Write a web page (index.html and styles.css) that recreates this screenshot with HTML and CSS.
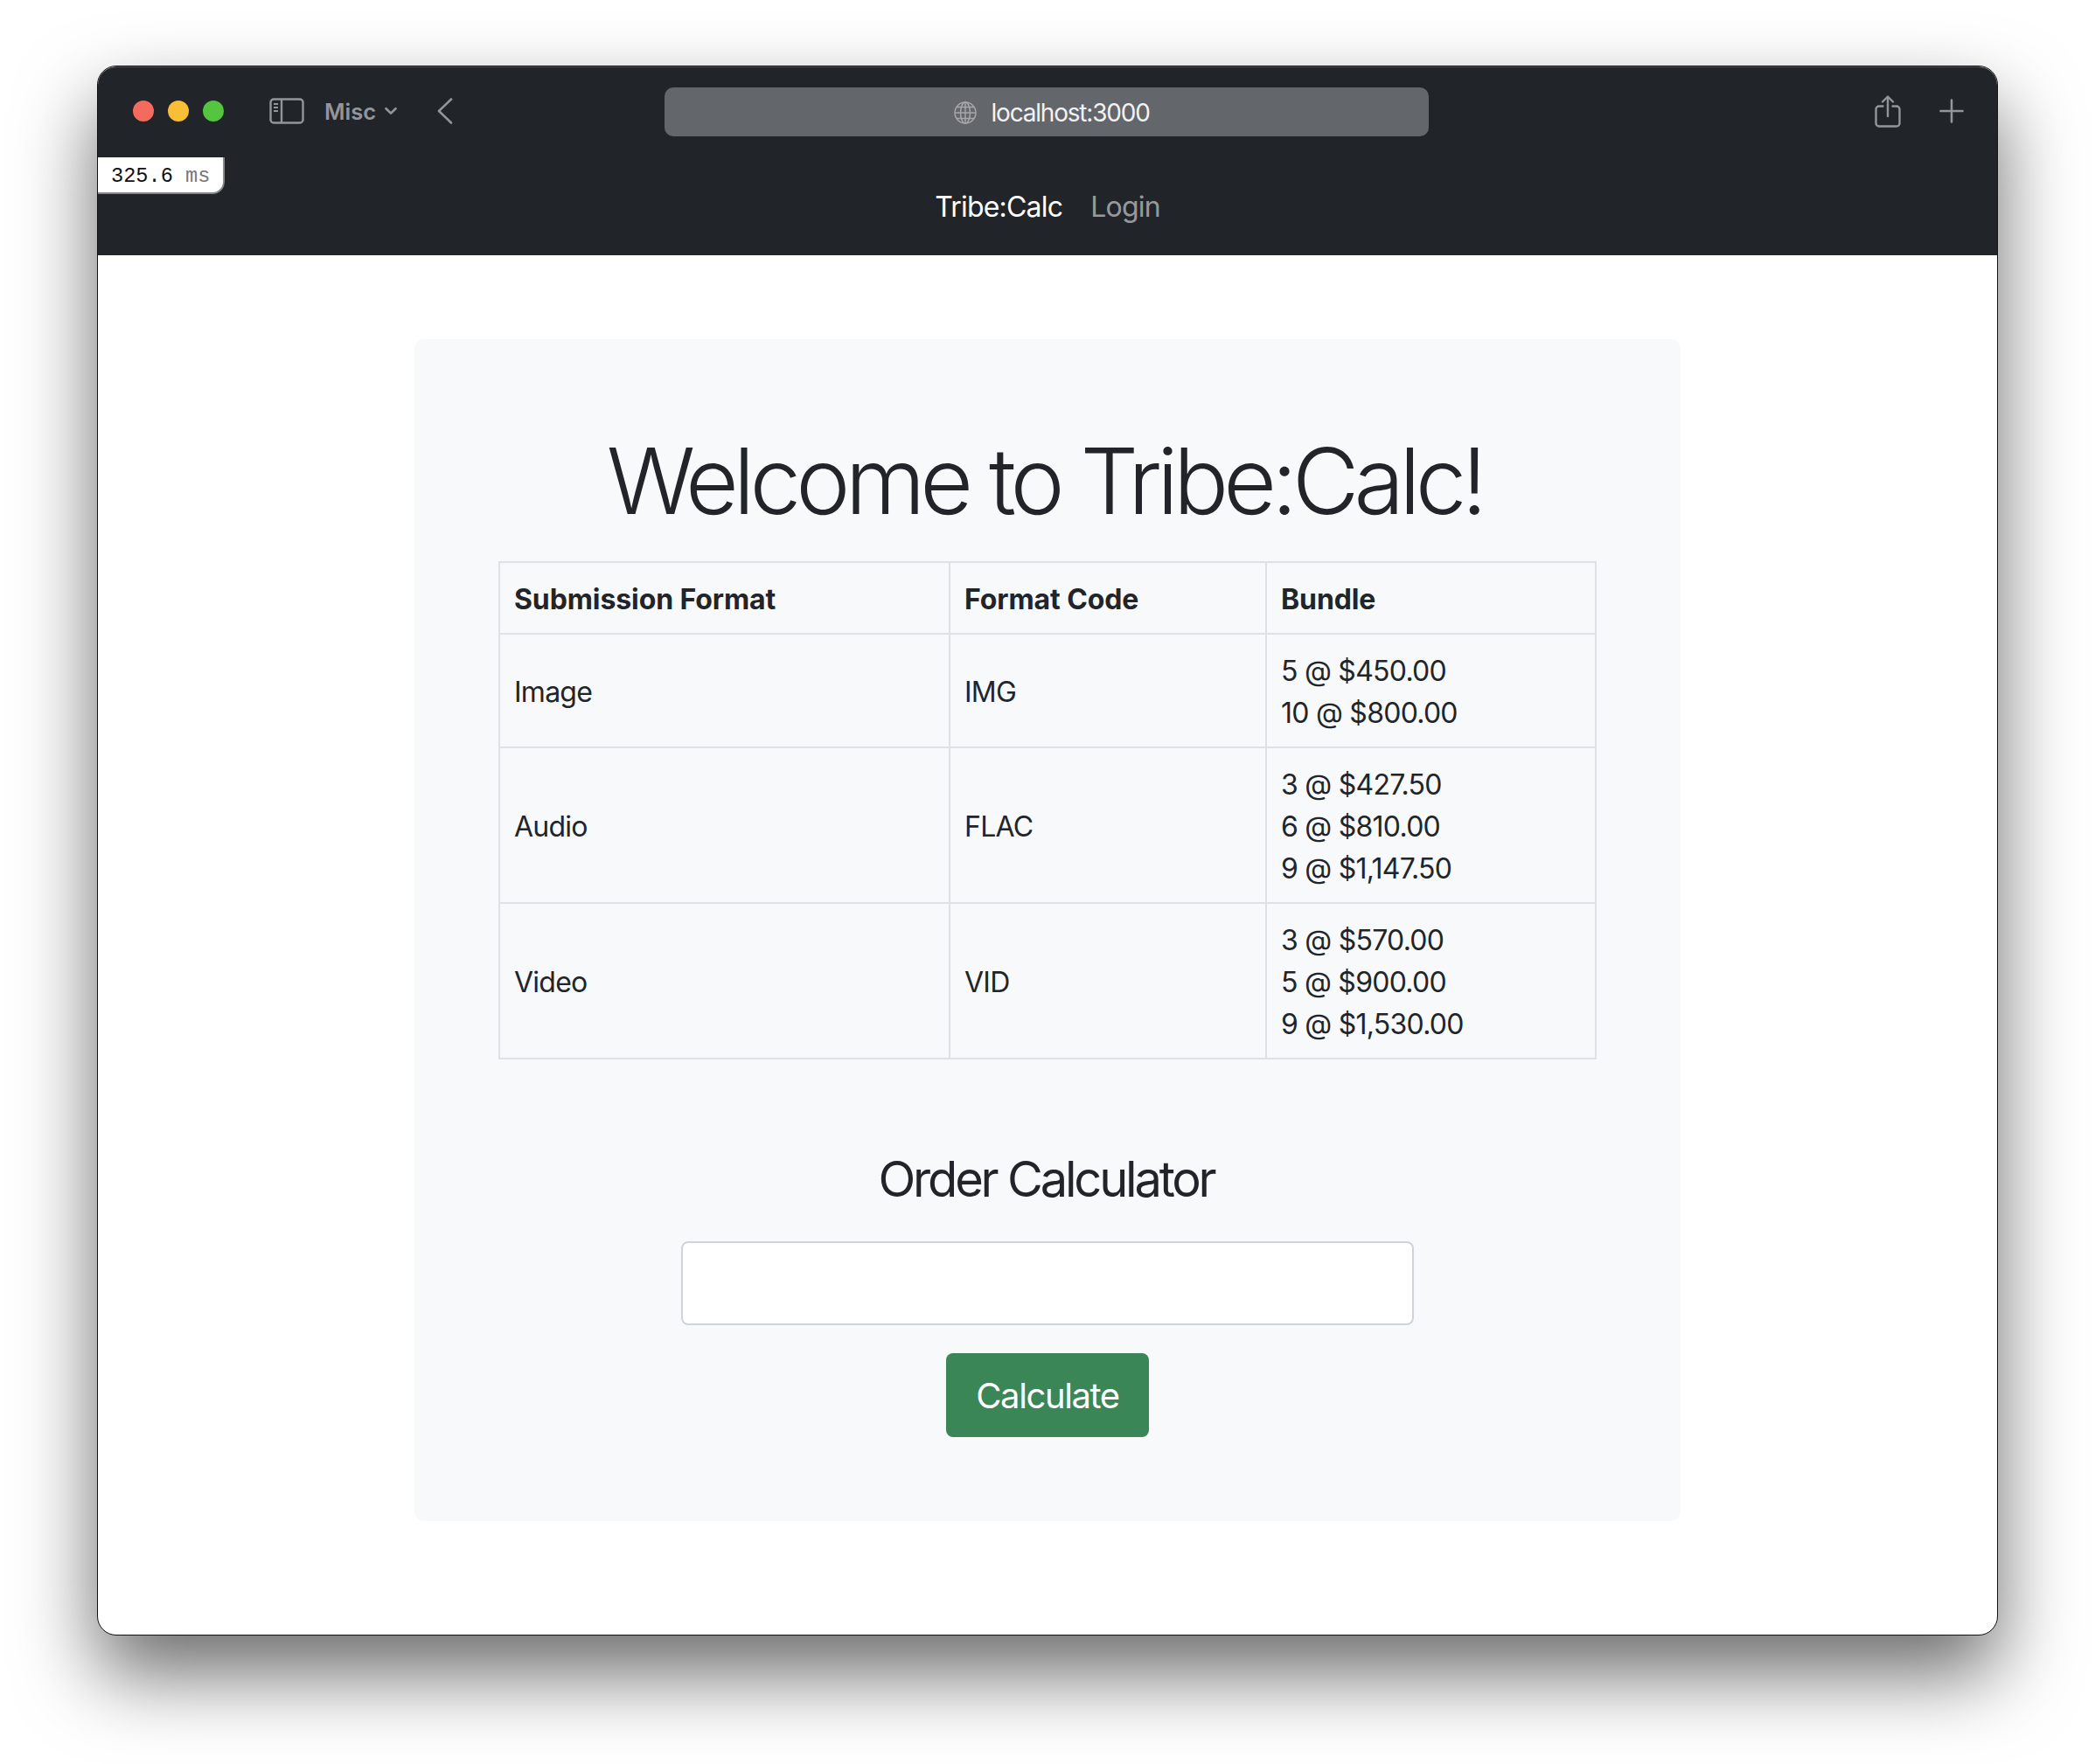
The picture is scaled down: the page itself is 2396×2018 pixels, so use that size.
FILE: index.html
```html
<!DOCTYPE html>
<html lang="en">
<head>
<meta charset="utf-8" />
<title>Tribe:Calc</title>
<link rel="stylesheet" href="styles.css">
</head>
<body>
	<div class="browser">
		<div class="toolbar">
			<div class="dots">
				<span class="dot red"></span>
				<span class="dot yellow"></span>
				<span class="dot green"></span>
			</div>
			<svg class="sideIcon" width="40" height="30" viewBox="0 0 40 30" fill="none" stroke="#92969b" stroke-width="2.4">
				<rect x="1.5" y="1.5" width="37" height="27" rx="3.5"/>
				<path d="M14 1.5v27"/>
				<path d="M5 7h5M5 11h5M5 15h5" stroke-width="2"/>
			</svg>
			<span class="misc">Misc</span>
			<svg class="miscArrow" width="14" height="10" viewBox="0 0 14 10" fill="none" stroke="#92969b" stroke-width="2.6" stroke-linecap="round" stroke-linejoin="round">
				<path d="M1.5 2.2L7 7.6l5.5-5.4"/>
			</svg>
			<svg class="backIcon" width="18" height="30" viewBox="0 0 18 30" fill="none" stroke="#92969b" stroke-width="2.6" stroke-linecap="round" stroke-linejoin="round">
				<path d="M16 1.5L2 15l14 13.5"/>
			</svg>
			<div class="urlBar">
				<svg class="globe" width="26" height="26" viewBox="0 0 26 26" fill="none" stroke="#a5a7aa" stroke-width="1.5">
					<circle cx="13" cy="13" r="12"/>
					<ellipse cx="13" cy="13" rx="5.5" ry="12"/>
					<path d="M13 1v24M1 13h24M3 6.5h20M3 19.5h20"/>
				</svg>
				<span>localhost:3000</span>
			</div>
			<svg class="shareIcon" width="30" height="37" viewBox="0 0 30 37" fill="none" stroke="#92969b" stroke-width="2.4" stroke-linecap="round" stroke-linejoin="round">
				<path d="M9.5 12.5H5a3.500 3.500 0 0 0-3.500 3.500v16A3.500 3.500 0 0 0 5 35.500h20a3.500 3.500 0 0 0 3.500-3.500V16a3.500 3.500 0 0 0-3.500-3.500h-4.500"/>
				<path d="M15 24V2M9 7.500L15 1.500l6 6"/>
			</svg>
			<svg class="plusIcon" width="28" height="28" viewBox="0 0 28 28" fill="none" stroke="#92969b" stroke-width="2.6" stroke-linecap="round">
				<path d="M14 1.500v25M1.500 14h25"/>
			</svg>
		</div>
		<div class="timer"><b>325.6</b> <i>ms</i></div>
		<div class="nav">
			<a class="brand">Tribe:Calc</a>
			<a class="navLink">Login</a>
		</div>
		<div class="main">
			<div class="card">
				<h1>Welcome to Tribe:Calc!</h1>
				<table>
					<tr>
						<th class="col1">Submission Format</th>
						<th class="col2">Format Code</th>
						<th class="col3">Bundle</th>
					</tr>
					<tr>
						<td>Image</td>
						<td>IMG</td>
						<td>5 @ $450.00<br />10 @ $800.00</td>
					</tr>
					<tr>
						<td>Audio</td>
						<td>FLAC</td>
						<td>3 @ $427.50<br />6 @ $810.00<br />9 @ $1,147.50</td>
					</tr>
					<tr>
						<td>Video</td>
						<td>VID</td>
						<td>3 @ $570.00<br />5 @ $900.00<br />9 @ $1,530.00</td>
					</tr>
				</table>
				<h3>Order Calculator</h3>
				<input class="orderInp" type="text" />
				<button class="calcBtn">Calculate</button>
			</div>
		</div>
	</div>
</body>
</html>
```

FILE: styles.css
```css
*{ padding:0; margin:0; box-sizing:border-box;}

body{ height:2018px; padding:75px 0 0 111px; overflow:hidden; background:#FFF; font-family:Inter,"Liberation Sans",sans-serif; color:#212529;}

.browser{ position:relative; width:2174px; height:1796px; background:#FFF; border-radius:22px; border:1px solid #111; box-shadow:0 44px 90px rgba(0,0,0,.58);}

.toolbar{ display:flex; align-items:center; height:104px; padding:0 0 3px 40px; background:#212529; border-radius:21px 21px 0 0; border-top:1px solid #555;}
.dots{ display:flex; gap:16px;}
.dot{ width:24px; height:24px; border-radius:50%;}
.red{ background:#F46B5D;}
.yellow{ background:#F8BE36;}
.green{ background:#53C53F;}
.sideIcon{ margin-left:52px;}
.misc{ margin-left:23px; font-size:25.5px; font-weight:600; color:#92969B;}
.miscArrow{ margin-left:10px;}
.backIcon{ margin-left:46px;}
.urlBar{ display:flex; align-items:center; justify-content:center; gap:16px; width:874px; height:56px; margin:1px 0 0 242px; padding:2px 0 0 12px; border-radius:10px; background:#63666A; color:#F2F2F3; font-size:28px; letter-spacing:-1.2px;}
.shareIcon{ margin-left:510px;}
.plusIcon{ margin-left:44px;}

.timer{ position:absolute; left:0; top:104px; width:145px; height:42px; padding:4px 0 0 15px; background:#FFF; border-right:2px solid #888; border-bottom:2px solid #888; border-radius:0 0 14px 0; font:23.6px/36px "Liberation Mono",monospace; color:#111;}
.timer b{ font-weight:normal;}
.timer i{ font-style:normal; color:#777;}

.nav{ display:flex; justify-content:center; align-items:center; gap:32px; height:112px; background:#212529; font-size:32px; letter-spacing:-.8px;}
.brand{ color:#FFF;}
.navLink{ color:rgba(255,255,255,.55);}

.main{ padding-top:96px;}
.card{ display:flex; flex-direction:column; align-items:center; width:1448px; height:1352px; margin-left:362px; padding:96px 96px 0; background:#F8F9FA; border-radius:10px;}

h1{ font-size:105px; font-weight:300; line-height:132px; letter-spacing:-5.9px; margin:0 7px 26px 0;}
h3{ font-size:56px; font-weight:400; line-height:67px; letter-spacing:-3.2px; margin:104px 3px 37px 0;}

table{ width:1254px; border-collapse:collapse; table-layout:fixed; font-size:32px; line-height:48px; letter-spacing:-.75px;}
th,td{ padding:18px 16px 14px; border:2px solid #DEE2E6; text-align:left; vertical-align:middle;}
th{ font-weight:700; letter-spacing:-.1px;}
.col1{ width:515px;}
.col2{ width:362px;}
.col3{ width:377px;}

.orderInp{ display:block; width:838px; height:96px; background:#FFF; border:2px solid #CED4DA; border-radius:8px;}
.calcBtn{ width:232px; height:96px; margin-top:32px; background:#3A8656; border:none; border-radius:8px; color:#FFF; font-family:Inter,"Liberation Sans",sans-serif; font-size:40px; letter-spacing:-1.4px;}
```
